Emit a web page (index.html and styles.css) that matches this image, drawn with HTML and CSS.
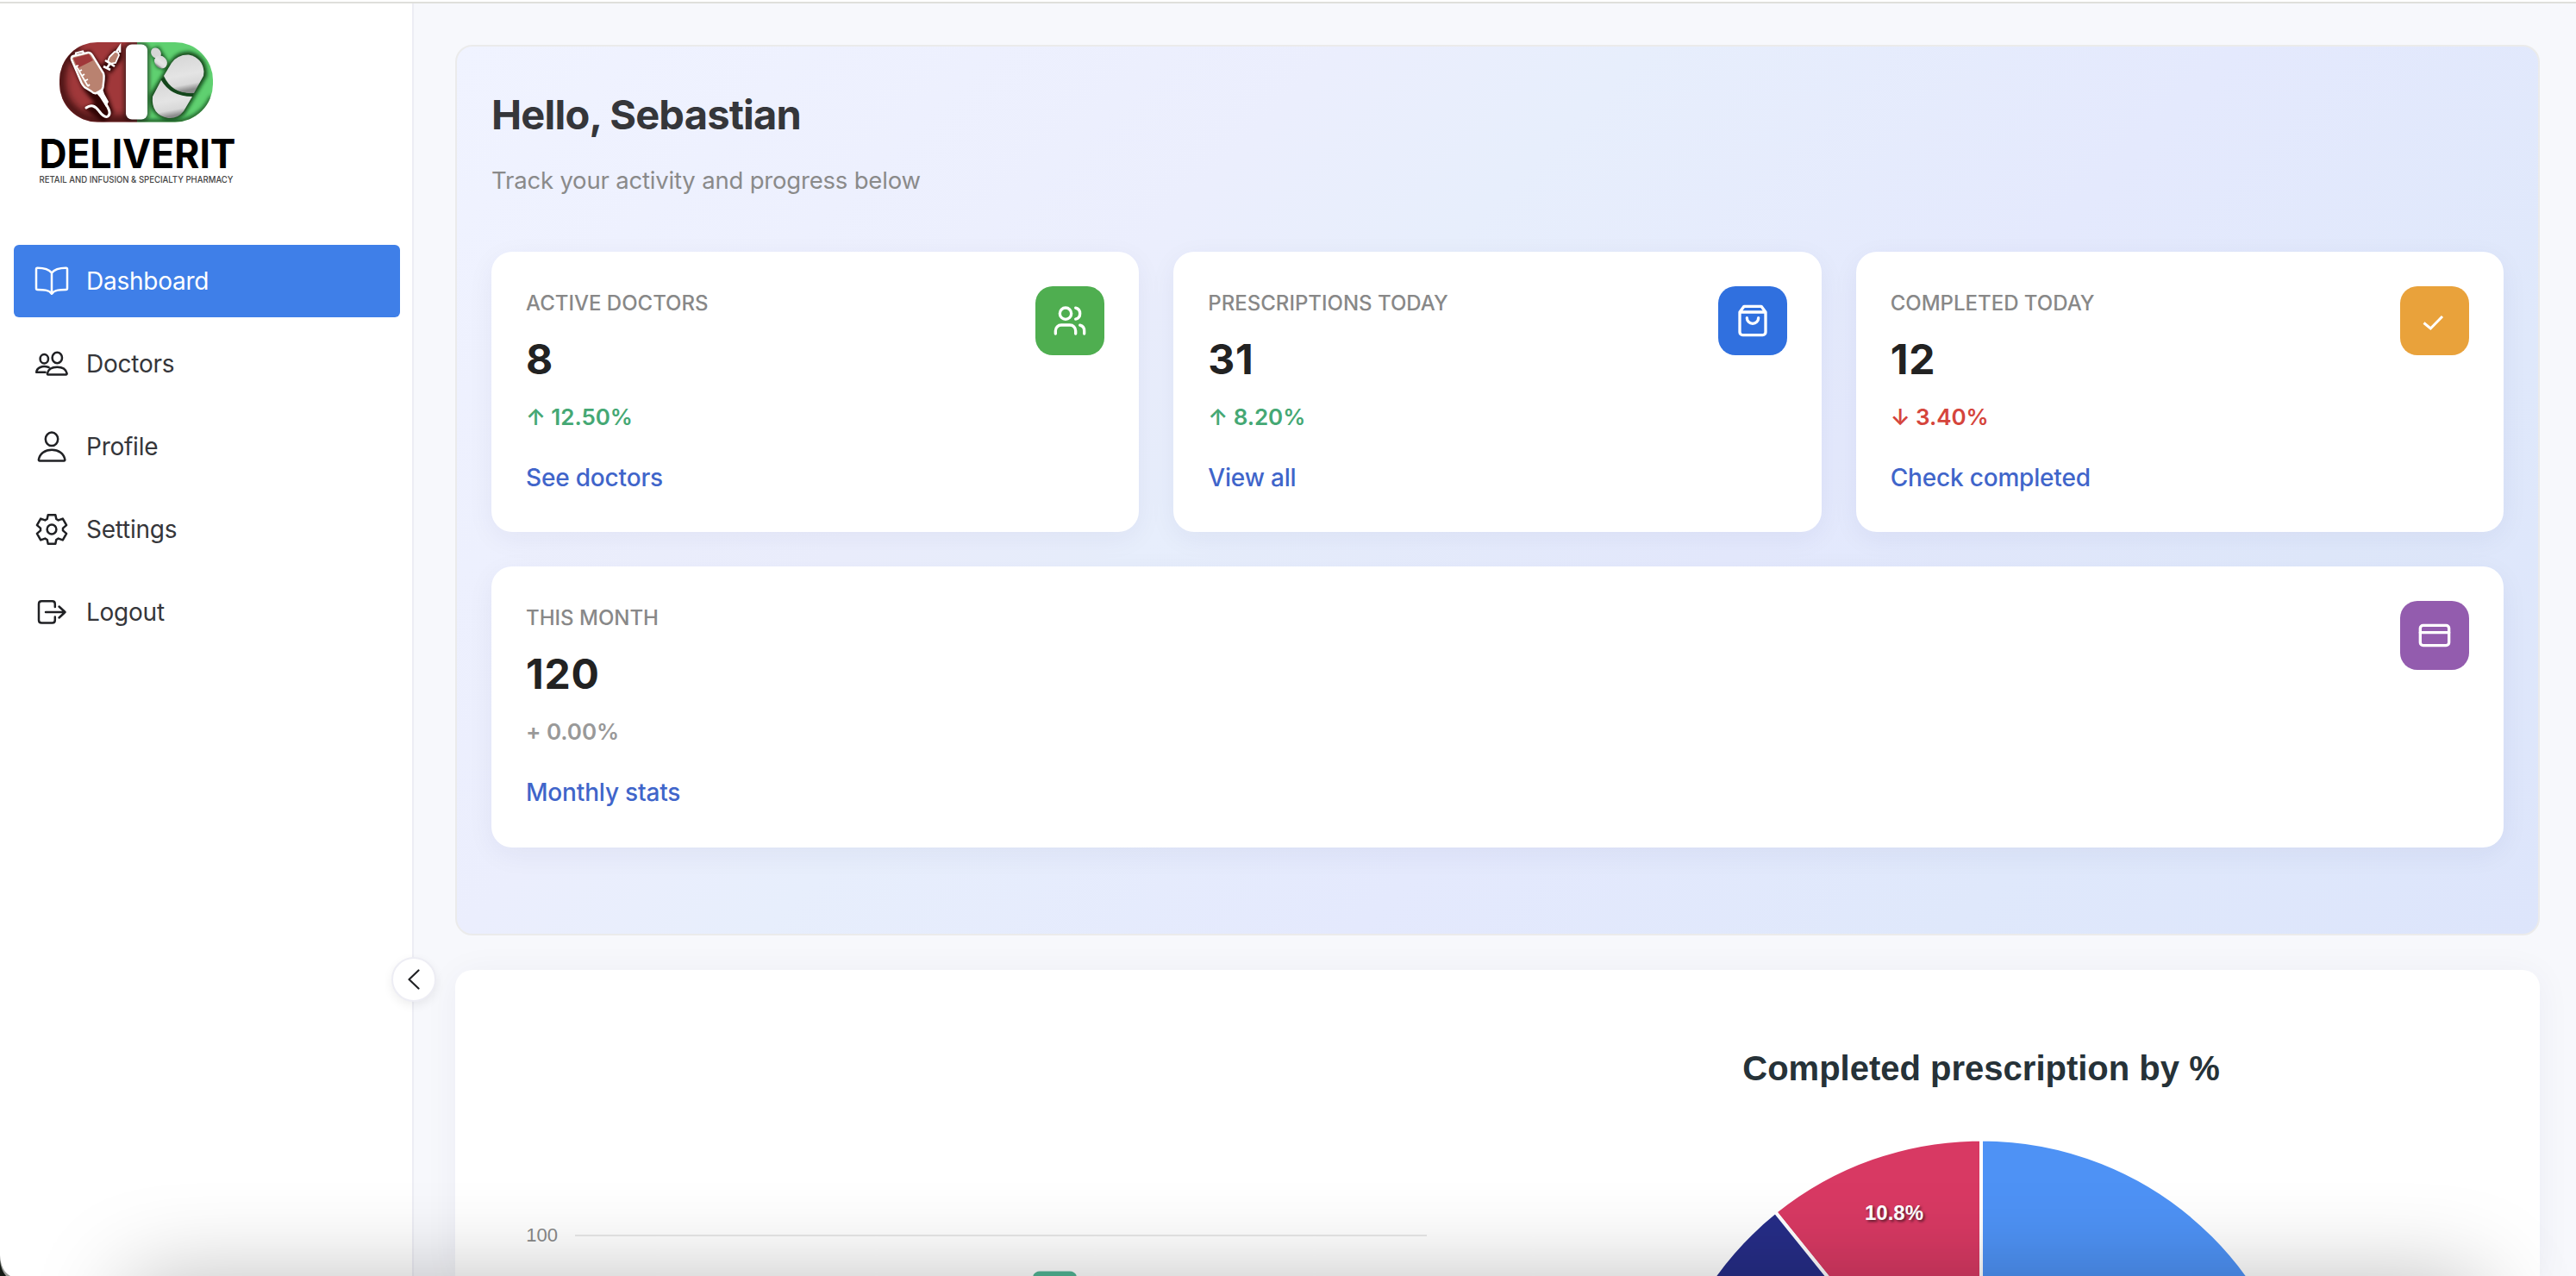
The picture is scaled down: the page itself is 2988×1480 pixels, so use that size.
FILE: index.html
```html
<!DOCTYPE html>
<html lang="en">
<head>
<meta charset="utf-8">
<title>DeliverIt Dashboard</title>
<link rel="stylesheet" href="styles.css">
</head>
<body>
<div class="topline"></div>
<div class="app">
  <aside class="sidebar">
    <svg class="logo" viewBox="32 40 256 184" role="img" aria-label="Deliverit">
      <defs>
        <clipPath id="pill"><rect x="69" y="49" width="178" height="92.5" rx="44"/></clipPath>
        <filter id="soft" x="-30%" y="-30%" width="160%" height="160%"><feGaussianBlur stdDeviation="4"/></filter>
        <filter id="soft2" x="-30%" y="-30%" width="160%" height="160%"><feGaussianBlur stdDeviation="2"/></filter>
        <linearGradient id="dome" x1="0" y1="0" x2="0.2" y2="1"><stop offset="0" stop-color="#d4d4d4"/><stop offset=".6" stop-color="#e4e4e4"/><stop offset=".85" stop-color="#d8d8d8"/><stop offset="1" stop-color="#8c8c8c"/></linearGradient>
      </defs>
      <g clip-path="url(#pill)">
        <rect x="69" y="49" width="90" height="93" fill="#a0383a"/>
        <rect x="159" y="49" width="88" height="93" fill="#5fd070"/>
        <path d="M159 139H114A43 43 0 0 1 71 96Q70 66 92 54" fill="none" stroke="#1c0303" stroke-width="9" opacity=".8" filter="url(#soft)"/>
        <path d="M159 141H204Q232 140 246 112" fill="none" stroke="#0b3a12" stroke-width="5" opacity=".8" filter="url(#soft2)"/>
        <rect x="146" y="51.5" width="25" height="87" rx="7" fill="none" stroke="#181008" stroke-width="5" opacity=".6" filter="url(#soft2)"/>
        <g filter="url(#soft2)" opacity=".9">
          <path d="M82 67L104 60L124 88L121 104L130 130L120 140L100 126L112 120L98 103Z" fill="#260405" stroke="#260405" stroke-width="3"/>
          <path d="M141 54L141 68L128 84L119 76L131 60Z" fill="#260405" stroke="#260405" stroke-width="2"/>
          <path d="M187 91L198 72Q206 60 220 61Q240 66 239 88L214 131Q206 140 192 138Q172 130 175 110Z" fill="#0b3a12" stroke="#0b3a12" stroke-width="2"/>
          <path d="M174 58L184 54L195 72L191 81L182 78Z" fill="#0b3a12"/>
        </g>
      </g>
      <rect x="146" y="51.5" width="25" height="87" rx="7" fill="#fff"/>
      <path d="M83 69Q82 66 85 65L102 61Q105 60.500 107 64L120 85Q121 88 120.500 92L119.500 101Q119 104 116 105.500L112 108Q109 109 106 106L98 101Q96 99 94.500 96Z" fill="#b98270" stroke="#fff" stroke-width="2.400"/>
      <path d="M85 67.500L103 62.500L108 70L90 79Z" fill="#a0383a"/>
      <path d="M88 64L88 61.500L96 59.500L97 61.500" fill="none" stroke="#fff" stroke-width="2.200"/>
      <path d="M88 76L102 100M88 77l3-1M91 83l4-2M95 88l3-2M98 94l4-2M102 100l2-2" fill="none" stroke="#fff" stroke-width="1.800"/>
      <path d="M111 107L119 103L121 109L126 118L123 124L116 113Z" fill="#fff"/>
      <path d="M123 121Q130 132 125 135Q121 137 115 129Q108 119 100 125" fill="none" stroke="#fff" stroke-width="3" stroke-linecap="round"/>
      <path d="M127 66L133 60L137 61L138 64L134 73L128 74L125 71Z" fill="#b98270" stroke="#fff" stroke-width="1.800"/>
      <path d="M135 60L139 54L139 61M128 73L124 79M122 70L133 77M120 77L128 81" fill="none" stroke="#fff" stroke-width="2.600"/>
      <ellipse cx="181" cy="61.500" rx="6.500" ry="5.500" transform="rotate(50 181 61.500)" fill="#d6d6d6"/>
      <ellipse cx="186.500" cy="72" rx="8" ry="6.800" transform="rotate(45 186.500 72)" fill="url(#dome)"/>
      <path d="M190 88L199 73Q206 63 219 63.500Q235 67 236.500 83L236 88L225 108Q200 110 190 88Z" fill="url(#dome)"/>
      <path d="M188 91Q198 110 224 110" fill="none" stroke="#14461b" stroke-width="3"/>
      <path d="M187 93Q198 112 223 112L213 129Q206 138 195 137Q175 133 177 112Z" fill="url(#dome)"/>
      <text x="45.500" y="195" class="logo-name" textLength="228" lengthAdjust="spacingAndGlyphs">DELIVERIT</text>
      <text x="45.500" y="211.500" class="logo-tag" textLength="225" lengthAdjust="spacingAndGlyphs">RETAIL AND INFUSION &amp; SPECIALTY PHARMACY</text>
    </svg>
    <nav class="nav">
      <a class="nav-item active"><svg class="nav-icon" viewBox="0 0 40 40"><path d="M20 10.500C16.500 6 9.500 4.700 3.500 4.700Q2 4.700 2 6.200V28.500Q2 30 3.500 30C10 30 17 30 20 34.800C23 30 30 30 36.500 30Q38 30 38 28.500V6.200Q38 4.700 36.500 4.700C30.500 4.700 23.500 6 20 10.500V34.500"/></svg>Dashboard</a>
      <a class="nav-item"><svg class="nav-icon" viewBox="0 0 40 40"><ellipse cx="11.300" cy="14.300" rx="4.700" ry="5.200"/><ellipse cx="26.300" cy="13" rx="5.700" ry="6.200"/><path d="M16.500 24C9 21.500 2.600 24.500 2.200 29.800H12.500M15.700 32.500H36.500Q37.800 32.500 37.600 31C36.500 26.500 32.300 23.700 26.300 23.700S16 26.500 14.900 31Q14.700 32.500 15.700 32.500Z"/></svg>Doctors</a>
      <a class="nav-item"><svg class="nav-icon" viewBox="0 0 40 40"><ellipse cx="20" cy="11.300" rx="7.200" ry="7.800"/><path d="M6 36.500H34.200Q35.500 36.500 35.300 35C34 28 28 23.700 20.100 23.700S6.200 28 4.900 35Q4.700 36.500 6 36.500Z"/></svg>Profile</a>
      <a class="nav-item"><svg class="nav-icon" viewBox="0 0 40 40"><circle cx="20" cy="20" r="5.400"/><path d="M15.700 3.200H24.300L25.300 8L27.700 9.400L32.800 7.600L37.100 15.100L33 18.600V21.400L37.100 24.900L32.800 32.400L27.700 30.600L25.300 32L24.300 36.800H15.700L14.700 32L12.300 30.600L7.200 32.400L2.900 24.900L7 21.400V18.600L2.900 15.100L7.200 7.600L12.300 9.400L14.700 8Z"/></svg>Settings</a>
      <a class="nav-item"><svg class="nav-icon" viewBox="0 0 40 40"><path d="M23.800 14V10.500Q23.800 7.300 20.600 7.300H8.300Q5 7.300 5 10.500V29.200Q5 32.500 8.300 32.500H20.600Q23.800 32.500 23.800 29.200V25.500M13 20H35.500M28.500 13.500L35.500 20L28.500 26.500"/></svg>Logout</a>
    </nav>
    <button class="collapse" aria-label="Collapse sidebar"><svg viewBox="0 0 24 24"><path d="M17.500 1.500L6.500 12L17.500 22.500"/></svg></button>
  </aside>

  <main class="main">
    <section class="panel">
      <h1>Hello, Sebastian</h1>
      <p class="subtitle">Track your activity and progress below</p>
      <div class="cards">
        <article class="card">
          <div class="card-body">
            <div class="label">ACTIVE DOCTORS</div>
            <div class="value">8</div>
            <div class="change up">↑ 12.50%</div>
            <a class="link">See doctors</a>
          </div>
          <span class="badge green"><svg viewBox="0 0 24 24"><path d="M16 21v-2a4 4 0 0 0-4-4H6a4 4 0 0 0-4 4v2M22 21v-2a4 4 0 0 0-3-3.870M16 3.130a4 4 0 0 1 0 7.750"/><circle cx="9" cy="7" r="4"/></svg></span>
        </article>
        <article class="card">
          <div class="card-body">
            <div class="label">PRESCRIPTIONS TODAY</div>
            <div class="value">31</div>
            <div class="change up">↑ 8.20%</div>
            <a class="link">View all</a>
          </div>
          <span class="badge blue"><svg viewBox="0 0 24 24"><path d="M6 2 3 6v14a2 2 0 0 0 2 2h14a2 2 0 0 0 2-2V6l-3-4ZM3 6h18M16 10a4 4 0 0 1-8 0"/></svg></span>
        </article>
        <article class="card">
          <div class="card-body">
            <div class="label">COMPLETED TODAY</div>
            <div class="value">12</div>
            <div class="change down">↓ 3.40%</div>
            <a class="link">Check completed</a>
          </div>
          <span class="badge orange"><svg class="check" viewBox="0 0 40 40"><path d="M7.500 22.500L15.300 29L29 15"/></svg></span>
        </article>
        <article class="card wide">
          <div class="card-body">
            <div class="label">THIS MONTH</div>
            <div class="value">120</div>
            <div class="change flat">+ 0.00%</div>
            <a class="link">Monthly stats</a>
          </div>
          <span class="badge purple"><svg viewBox="0 0 24 24"><rect x="2" y="5" width="20" height="14" rx="2"/><path d="M2 10h20"/></svg></span>
        </article>
      </div>
    </section>

    <section class="charts">
      <svg class="bar-chart" viewBox="568 1165 1122 315">
        <text x="647" y="1440" class="tick" text-anchor="end">100</text>
        <path d="M667 1433H1655" stroke="#e9e9e9" stroke-width="2"/>
        <path d="M1198.500 1480V1479Q1201 1474.500 1206 1474.500H1241Q1246 1474.500 1248.500 1479V1480Z" fill="#52b595"/>
      </svg>
      <div class="pie-box">
        <h2>Completed prescription by %</h2>
        <svg class="pie" viewBox="1690 1315 1216 165">
          <g stroke="#fff" stroke-width="4" stroke-linejoin="round">
            <path d="M2298 1702V1321.500A380.500 380.500 0 0 1 2298 2082.500Z" fill="#4e92f5"/>
            <path d="M2298 1702L2059.200 1405.800A380.500 380.500 0 0 1 2298 1321.500Z" fill="#d83963"/>
            <path d="M2298 1702L1917.500 1702A380.500 380.500 0 0 1 2059.200 1405.800Z" fill="#262d87"/>
          </g>
          <text x="2197" y="1415" class="slice-label" text-anchor="middle">10.8%</text>
        </svg>
      </div>
    </section>
  </main>
</div>
<div class="dock-shadow"></div>
<svg class="corner" viewBox="0 0 12 24"><path d="M0 0Q1 18 12 24H0Z" fill="#9a9c99"/><path d="M0 6Q1 17 7 24H0Z" fill="#141a14"/></svg>
</body>
</html>
```
FILE: styles.css
```css
* { box-sizing: border-box; }

html { height: 1480px; overflow: hidden; }

body {
  margin: 0;
  width: 2988px;
  height: 1480px;
  overflow: hidden;
  position: relative;
  background: #f7f8fc;
  font-family: Inter, "Liberation Sans", sans-serif;
}

h1, h2, p { margin: 0; }

.topline { height: 4px; background: #fff; border-bottom: 2px solid #dfdfdb; }

.app { display: flex; height: 1476px; }

.sidebar {
  position: relative;
  flex: none;
  width: 480px;
  background: #fff;
  border-right: 2px solid #ededf4;
}

.logo { display: block; width: 256px; height: 184px; margin: 36px 0 60px 32px; overflow: visible; }
.logo-name { font: 700 46px Inter, sans-serif; fill: #000; }
.logo-tag { font: 500 10.500px Inter, sans-serif; fill: #444; }

.nav { display: flex; flex-direction: column; gap: 12px; padding: 0 14px 0 16px; }

.nav-item {
  display: flex;
  align-items: center;
  gap: 20px;
  height: 84px;
  padding-left: 24px;
  border-radius: 6px;
  font-size: 28px;
  letter-spacing: -0.250px;
  color: #35363a;
}

.nav-icon { width: 40px; height: 40px; fill: none; stroke: #202124; stroke-width: 2.500; stroke-linecap: round; stroke-linejoin: round; }
.nav-item.active { background: #3f7fe8; color: #fff; }
.active .nav-icon { stroke: #fff; }

.collapse {
  position: absolute;
  left: 454px;
  top: 1106px;
  width: 52px;
  height: 52px;
  padding: 0;
  display: flex;
  align-items: center;
  justify-content: center;
  border: 2px solid #ededf4;
  border-radius: 50%;
  background: #fff;
  box-shadow: 0 4px 12px rgba(0, 0, 0, .07);
}
.collapse svg { width: 24px; height: 24px; fill: none; stroke: #202124; stroke-width: 2.200; stroke-linecap: round; stroke-linejoin: round; }

.main { flex: 1; padding: 48px 42px 0 48px; display: flex; flex-direction: column; gap: 40px; }

.panel {
  flex: none;
  height: 1033px;
  padding: 40px;
  border: 2px solid #ebebeb;
  border-radius: 20px;
  background: linear-gradient(135deg, #f0f3ff 0%, #ebeefd 30%, #e7eefc 40%, #e4e9fd 60%, #dfe8fb 80%, #dde5fb 100%);
}

h1 { font-size: 47px; line-height: 78px; letter-spacing: -0.800px; color: #35363a; }
.subtitle { margin: 16px 0 62px; font-size: 27.500px; line-height: 42px; letter-spacing: -0.190px; color: #8a8a8a; }

.cards { display: grid; grid-template-columns: repeat(3, 1fr); grid-auto-rows: 325.300px; gap: 40px; }

.card {
  display: flex;
  justify-content: space-between;
  padding: 40px;
  border-radius: 24px;
  background: #fff;
  box-shadow: 0 8px 32px rgba(30, 40, 90, .055);
}
.card.wide { grid-column: 1 / -1; }

.label { font-size: 24px; font-weight: 500; line-height: 39px; color: #888; }
.value { margin-top: 16.500px; font-size: 48px; font-weight: 700; line-height: 58px; letter-spacing: 0.800px; color: #222; }
.change { margin-top: 18px; font-size: 26px; font-weight: 600; line-height: 40px; letter-spacing: -0.050px; }
.change.up { color: #45a874; }
.change.down { color: #d5453c; }
.change.flat { color: #999; }
.link { display: block; margin-top: 29.500px; font-size: 28px; font-weight: 500; line-height: 42px; letter-spacing: -0.180px; color: #4065ca; }

.badge { display: flex; align-items: center; justify-content: center; width: 80px; height: 80px; border-radius: 20px; }
.badge svg { width: 40px; height: 40px; fill: none; stroke: #fff; stroke-width: 2; stroke-linecap: round; stroke-linejoin: round; }
.badge .check { stroke-width: 3; stroke-linecap: butt; stroke-linejoin: miter; }
.green { background: #4fae50; }
.blue { background: #3070df; }
.orange { background: #e9a23b; }
.purple { background: #935cae; }

.charts {
  flex: 1;
  min-height: 0;
  display: grid;
  grid-template-columns: 1122px 1216px;
  padding: 40px 40px 0;
  border-radius: 20px 20px 0 0;
  background: #fff;
  box-shadow: 0 4px 40px rgba(30, 40, 90, .05);
}
.bar-chart { display: block; width: 1122px; height: 315px; }
.tick { font: 22px "Liberation Sans", sans-serif; fill: #888; }
.pie-box { padding-top: 50px; }
h2 { font: 700 40px/48px "Liberation Sans", sans-serif; text-align: center; color: #263238; }
.pie { display: block; width: 1216px; height: 165px; margin-top: 52px; }
.slice-label { font: 700 24px "Liberation Sans", sans-serif; fill: #fff; text-shadow: 2px 2px 3px rgba(0, 0, 0, .55); }

/* soft shade rising from below the window edge */
.dock-shadow {
  position: absolute;
  top: 1486px;
  left: 150px;
  right: 110px;
  height: 200px;
  box-shadow: 0 0 110px rgba(0, 0, 0, .28);
}
.corner { position: absolute; left: 0; bottom: 0; width: 12px; height: 24px; }
```
